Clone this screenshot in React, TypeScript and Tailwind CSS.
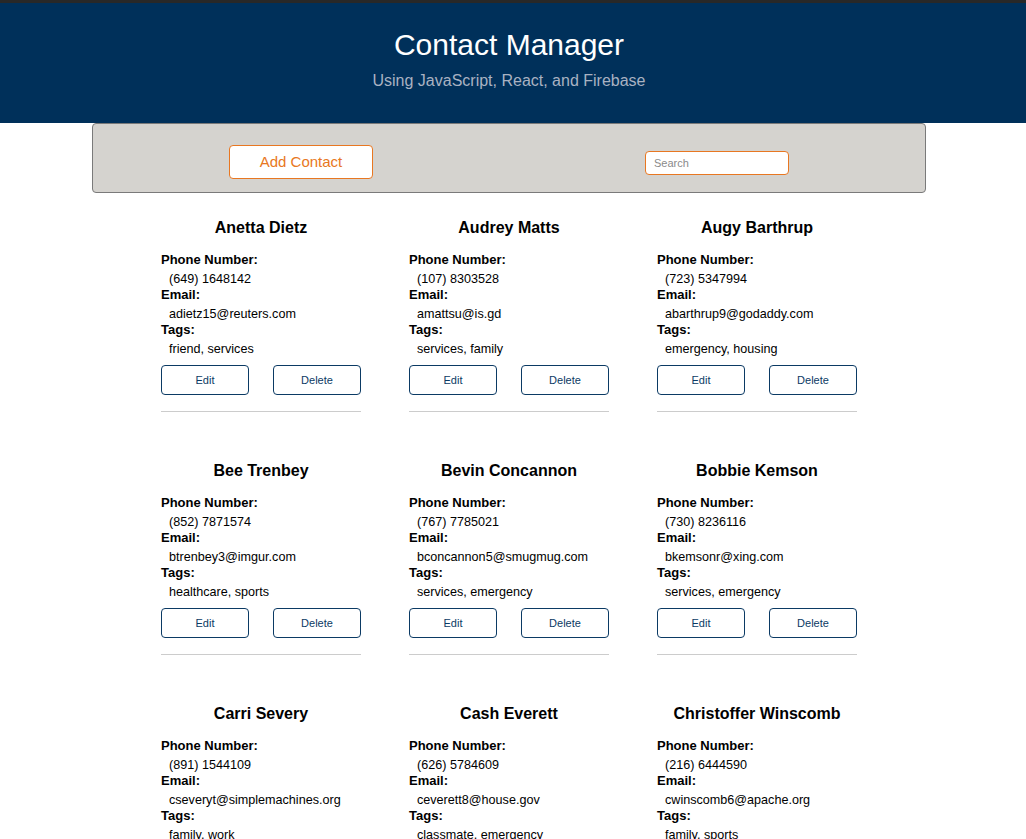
import React from "react"

type Contact = {
  name: string
  phone: string
  email: string
  tags: string
}

const contacts: Contact[] = [
  { name: "Anetta Dietz", phone: "(649) 1648142", email: "adietz15@reuters.com", tags: "friend, services" },
  { name: "Audrey Matts", phone: "(107) 8303528", email: "amattsu@is.gd", tags: "services, family" },
  { name: "Augy Barthrup", phone: "(723) 5347994", email: "abarthrup9@godaddy.com", tags: "emergency, housing" },
  { name: "Bee Trenbey", phone: "(852) 7871574", email: "btrenbey3@imgur.com", tags: "healthcare, sports" },
  { name: "Bevin Concannon", phone: "(767) 7785021", email: "bconcannon5@smugmug.com", tags: "services, emergency" },
  { name: "Bobbie Kemson", phone: "(730) 8236116", email: "bkemsonr@xing.com", tags: "services, emergency" },
  { name: "Carri Severy", phone: "(891) 1544109", email: "cseveryt@simplemachines.org", tags: "family, work" },
  { name: "Cash Everett", phone: "(626) 5784609", email: "ceverett8@house.gov", tags: "classmate, emergency" },
  { name: "Christoffer Winscomb", phone: "(216) 6444590", email: "cwinscomb6@apache.org", tags: "family, sports" },
]

const Field = ({ label, value }: { label: string; value: string }) => (
  <>
    <div className="text-[13px] font-bold leading-4 text-black">{label}</div>
    <div className="text-[12.6px] leading-4 mt-[3px] pl-2 text-black">{value}</div>
  </>
)

const ContactCard = ({ contact }: { contact: Contact }) => (
  <div className="w-[200px] flex flex-col mb-[49px]">
    <h3 className="text-center text-[16px] font-bold leading-5 text-black">{contact.name}</h3>
    <div className="mt-[14px]">
      <Field label="Phone Number:" value={contact.phone} />
      <Field label="Email:" value={contact.email} />
      <Field label="Tags:" value={contact.tags} />
    </div>
    <div className="flex justify-between mt-[8px]">
      <button className="w-[88px] h-[30px] border border-[#0b3a64] rounded text-[11px] text-[#0b3a64] bg-white">
        Edit
      </button>
      <button className="w-[88px] h-[30px] border border-[#0b3a64] rounded text-[11px] text-[#0b3a64] bg-white">
        Delete
      </button>
    </div>
    <div className="mt-4 h-px bg-[#cccccc]" />
  </div>
)

const App = () => {
  return (
    <div className="min-h-screen bg-white" style={{ fontFamily: '"Liberation Sans", Arial, sans-serif' }}>
      <div className="h-[3px] bg-[#282828]" />
      <header className="h-[120px] bg-[#00305a] flex flex-col items-center pt-6 pr-[8px]">
        <h1 className="text-[30px] leading-9 text-white">Contact Manager</h1>
        <p className="mt-[9px] text-[16px] leading-[18px] font-light text-[#a9b2c2]">
          Using JavaScript, React, and Firebase
        </p>
      </header>

      <div className="ml-[92px] w-[834px]">
        <div className="h-[70px] bg-[#d5d3cf] border border-[#7a7a7a] rounded-[4px] grid grid-cols-2 pt-[21px]">
          <div className="flex justify-center">
            <button className="w-[144px] h-[34px] bg-white border border-[#e87722] rounded text-[15px] text-[#e87722]">
              Add Contact
            </button>
          </div>
          <div className="flex justify-center items-center h-[34px] pt-[2px]">
            <input
              placeholder="Search"
              className="w-[144px] h-[24px] bg-white border border-[#e87722] rounded px-2 text-[11px] placeholder:text-[#8a8a8a] outline-none"
            />
          </div>
        </div>

        <div className="grid grid-cols-[200px_200px_200px] gap-x-12 justify-center mt-[25px]">
          {contacts.map((c) => (
            <ContactCard key={c.name} contact={c} />
          ))}
        </div>
      </div>
    </div>
  )
}

export default App
